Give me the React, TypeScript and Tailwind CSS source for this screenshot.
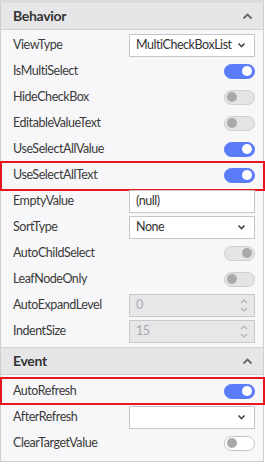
import React from 'react';

type Row =
  | { label: string; kind: 'toggle'; look: 'on' | 'off' | 'onDisabled' | 'offWhite' }
  | { label: string; kind: 'select'; value: string }
  | { label: string; kind: 'text'; value: string }
  | { label: string; kind: 'number'; value: string };

const behavior: Row[] = [
  { label: 'ViewType', kind: 'select', value: 'MultiCheckBoxList' },
  { label: 'IsMultiSelect', kind: 'toggle', look: 'on' },
  { label: 'HideCheckBox', kind: 'toggle', look: 'off' },
  { label: 'EditableValueText', kind: 'toggle', look: 'off' },
  { label: 'UseSelectAllValue', kind: 'toggle', look: 'on' },
  { label: 'UseSelectAllText', kind: 'toggle', look: 'on' },
  { label: 'EmptyValue', kind: 'text', value: '(null)' },
  { label: 'SortType', kind: 'select', value: 'None' },
  { label: 'AutoChildSelect', kind: 'toggle', look: 'onDisabled' },
  { label: 'LeafNodeOnly', kind: 'toggle', look: 'off' },
  { label: 'AutoExpandLevel', kind: 'number', value: '0' },
  { label: 'IndentSize', kind: 'number', value: '15' },
];

const events: Row[] = [
  { label: 'AutoRefresh', kind: 'toggle', look: 'on' },
  { label: 'AfterRefresh', kind: 'select', value: '' },
  { label: 'ClearTargetValue', kind: 'toggle', look: 'offWhite' },
];

const ChevronDown = ({ className = '' }: { className?: string }) => (
  <svg width="9" height="6" viewBox="0 0 9 6" className={className}>
    <path d="M1.5 1.5 L4.5 4.5 L7.5 1.5" fill="none" stroke="currentColor" strokeWidth="1.6" />
  </svg>
);

const ChevronUp = ({ className = '' }: { className?: string }) => (
  <svg width="11" height="7" viewBox="0 0 11 7" className={className}>
    <path d="M1.5 5.5 L5.5 1.5 L9.5 5.5" fill="none" stroke="currentColor" strokeWidth="1.8" />
  </svg>
);

const Toggle = ({ look }: { look: string }) => {
  const track =
    look === 'on'
      ? 'bg-[#5b7cf8] border-[#5b7cf8]'
      : look === 'offWhite'
      ? 'bg-white border-[#c4c4c4]'
      : 'bg-[#e4e4e6] border-[#cfcfd2]';
  const knob = look === 'on' ? 'bg-white' : 'bg-[#a9a9ab]';
  const right = look === 'on' || look === 'onDisabled';
  return (
    <div className={`w-[31px] h-[15px] rounded-full border flex items-center px-[2px] ${track} ${right ? 'justify-end' : 'justify-start'}`}>
      <div className={`w-[10px] h-[10px] rounded-full ${knob}`} />
    </div>
  );
};

const Control = ({ row }: { row: Row }) => {
  if (row.kind === 'toggle') return <Toggle look={row.look} />;
  if (row.kind === 'select')
    return (
      <div className="w-[126px] h-[23px] bg-white border border-[#c6c6c8] flex items-center pl-[6px] pr-[8px] gap-[4px]">
        <span className="flex-1 text-[#333] whitespace-nowrap leading-normal">{row.value}</span>
        <ChevronDown className="text-[#444] shrink-0" />
      </div>
    );
  if (row.kind === 'text')
    return (
      <div className="w-[126px] h-[23px] bg-white border border-[#c6c6c8] flex items-center pl-[6px]">
        <span className="text-[#333]">{row.value}</span>
      </div>
    );
  return (
    <div className="w-[126px] h-[23px] bg-[#e7e7ea] border border-[#c9c9cc] flex items-center pl-[6px] pr-[6px]">
      <span className="flex-1 text-[#a8a8aa]">{row.value}</span>
      <div className="flex flex-col items-center gap-[3px] text-[#b0b0b2]">
        <svg width="8" height="5" viewBox="0 0 8 5">
          <path d="M1 4 L4 1 L7 4" fill="none" stroke="currentColor" strokeWidth="1.2" />
        </svg>
        <svg width="8" height="5" viewBox="0 0 8 5">
          <path d="M1 1 L4 4 L7 1" fill="none" stroke="currentColor" strokeWidth="1.2" />
        </svg>
      </div>
    </div>
  );
};

const PropRow = ({ row, highlight }: { row: Row; highlight?: 'a' | 'b' }) => (
  <div className="relative h-[26px] flex items-center pl-[12px] pr-[8px]">
    <span className="flex-1 text-[#3a3a3a]">{row.label}</span>
    <Control row={row} />
    {highlight === 'a' && (
      <div className="absolute left-[-1px] right-[-2px] top-[-1px] h-[30px] border-2 border-[#e8141e]" />
    )}
    {highlight === 'b' && (
      <div className="absolute left-[-1px] right-[-2px] top-[-1px] h-[28px] border-2 border-[#e8141e]" />
    )}
  </div>
);

const SectionHeader = ({ title }: { title: string }) => (
  <div className="h-[27px] bg-[#e6e6e9] border-b border-[#d2d2d5] flex items-center pl-[12px] pr-[10px]">
    <span className="flex-1 font-bold text-[14px] tracking-[-0.3px] text-[#333]">{title}</span>
    <ChevronUp className="text-[#666]" />
  </div>
);

export default function App() {
  return (
    <div
      className="w-[265px] h-[464px] bg-white text-[12.5px] tracking-[-0.45px] leading-none"
      style={{ fontFamily: 'Lato, "Noto Sans", sans-serif' }}
    >
      <div className="w-[264px] h-[462px] border-x border-t-[3px] border-b border-[#cfcfd2] border-t-[#dcdcdf] bg-[#f7f7f9] flex flex-col">
        <SectionHeader title="Behavior" />
        <div className="pt-[2px] pb-[3px]">
          {behavior.map((r) => (
            <PropRow key={r.label} row={r} highlight={r.label === 'UseSelectAllText' ? 'a' : undefined} />
          ))}
        </div>
        <div className="border-t border-[#d2d2d5]" />
        <SectionHeader title="Event" />
        <div className="pt-[3px]">
          {events.map((r) => (
            <PropRow key={r.label} row={r} highlight={r.label === 'AutoRefresh' ? 'b' : undefined} />
          ))}
        </div>
      </div>
    </div>
  );
}
